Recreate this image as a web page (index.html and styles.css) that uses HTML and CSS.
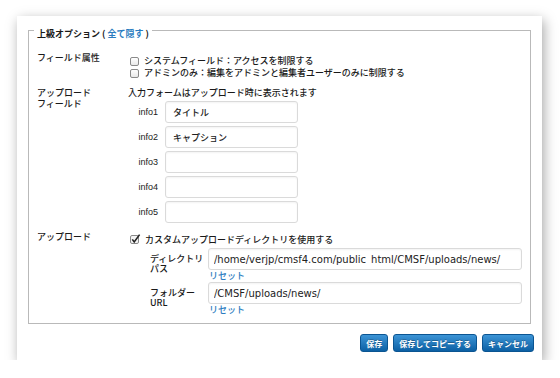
FILE: index.html
```html
<!DOCTYPE html>
<html lang="ja">
<head>
  <meta charset="UTF-8">
  <meta name="viewport" content="width=device-width, initial-scale=1.0">
  <title>上級オプション</title>
  <link rel="stylesheet" href="styles.css">
</head>
<body>
  <div class="dialog">
    <fieldset class="options">
      <legend>上級オプション ( <a href="#">全て隠す</a> )</legend>

      <div class="row">
        <div class="row-label">フィールド属性</div>
        <div class="checks">
          <label class="check"><span class="box"></span>システムフィールド：アクセスを制限する</label>
          <label class="check"><span class="box"></span>アドミンのみ：編集をアドミンと編集者ユーザーのみに制限する</label>
        </div>
      </div>

      <div class="row">
        <div class="row-label">アップロード<br>フィールド</div>
        <div>
          <div class="hint">入力フォームはアップロード時に表示されます</div>
          <div class="info-list">
            <div class="info-row"><label for="info1">info1</label><input type="text" id="info1" value="タイトル"></div>
            <div class="info-row"><label for="info2">info2</label><input type="text" id="info2" value="キャプション"></div>
            <div class="info-row"><label for="info3">info3</label><input type="text" id="info3"></div>
            <div class="info-row"><label for="info4">info4</label><input type="text" id="info4"></div>
            <div class="info-row"><label for="info5">info5</label><input type="text" id="info5"></div>
          </div>
        </div>
      </div>

      <div class="row">
        <div class="row-label">アップロード</div>
        <div>
          <div class="checks">
            <label class="check">
              <svg class="box-checked" width="11" height="11" viewBox="0 0 11 11">
                <rect x="0.5" y="1.5" width="8" height="8" rx="1.5" fill="#f4f4f4" stroke="#8a8a8a"/>
                <path d="M2.3 5.4 L4.2 8 L9.6 0.6" fill="none" stroke="#222" stroke-width="1.6"/>
              </svg>カスタムアップロードディレクトリを使用する
            </label>
          </div>
          <div class="paths">
            <div class="path-row">
              <label for="dir-path">ディレクトリ<br>パス</label>
              <div>
                <input type="text" id="dir-path" class="path-input" value="/home/verjp/cmsf4.com/public_html/CMSF/uploads/news/">
                <a href="#" class="reset">リセット</a>
              </div>
            </div>
            <div class="path-row">
              <label for="folder-url">フォルダー<br>URL</label>
              <div>
                <input type="text" id="folder-url" class="path-input" value="/CMSF/uploads/news/">
                <a href="#" class="reset">リセット</a>
              </div>
            </div>
          </div>
        </div>
      </div>
    </fieldset>

    <div class="actions">
      <button>保存</button>
      <button>保存してコピーする</button>
      <button>キャンセル</button>
    </div>
  </div>
</body>
</html>
```

FILE: styles.css
```css
/* Page */
body {
  margin: 0;
  padding: 16px 0 0 17px;
  background: #fff;
  font-family: "Noto Sans CJK JP", sans-serif;
  font-size: 9px;
  font-weight: 500;
  color: #1a1a1a;
}

a {
  color: #2a7cc0;
  text-decoration: none;
}

/* Dialog card */
.dialog {
  width: 525px;
  height: 344px;
  box-sizing: border-box;
  padding: 5px 11px 9px;
  background: #fff;
  box-shadow: 2px 4px 12px rgba(0, 0, 0, 0.35);
}

.options {
  margin: 0;
  padding: 13px 7px 7px 8px;
  border: 1px solid #b9b9b9;
  min-width: 0;
}

.options legend {
  margin-left: -3px;
  padding: 8px 3px 0;
  font-weight: bold;
  line-height: 10px;
}

/* Form rows */
.row {
  display: grid;
  grid-template-columns: 91px 1fr;
  margin-bottom: 8px;
}

.row:last-child {
  margin-bottom: 0;
}

.row-label {
  line-height: 11px;
}

.checks {
  padding-top: 3px;
}

.check {
  display: flex;
  align-items: center;
  height: 12px;
  line-height: 12px;
}

.box {
  width: 7px;
  height: 7px;
  margin: 0 5px 0 2px;
  border: 1px solid #8a8a8a;
  border-radius: 2px;
  background: linear-gradient(#fff, #e9e9e9);
}

.box-checked {
  margin: -2px 4px 0 2px;
}

.hint {
  line-height: 12px;
}

/* Inputs */
input[type="text"] {
  box-sizing: border-box;
  height: 22px;
  margin: 0;
  padding: 0 7px;
  border: 1px solid #dadada;
  border-radius: 3px;
  background: #fff;
  box-shadow: inset 0 1px 2px rgba(0, 0, 0, 0.05);
  font-family: "Noto Sans CJK JP", sans-serif;
  font-size: 9px;
  font-weight: 500;
  line-height: 20px;
  color: #222;
  outline: none;
}

.info-list {
  margin-top: 2px;
}

.info-row {
  display: flex;
  align-items: center;
  gap: 7px;
  margin-bottom: 3px;
}

.info-row:last-child {
  margin-bottom: 0;
}

.info-row label {
  width: 30px;
  text-align: right;
  font-family: "Liberation Sans", Arial, sans-serif;
  font-size: 9px;
  font-weight: normal;
}

.info-row input {
  width: 133px;
}

.paths {
  margin-top: 2px;
}

.path-row {
  display: grid;
  grid-template-columns: 58px 314px;
  margin-left: 22px;
  margin-bottom: 1px;
}

.path-row label {
  padding-top: 6px;
  line-height: 10px;
}

input.path-input {
  display: block;
  width: 314px;
  padding-left: 5px;
  font-family: "DejaVu Sans", sans-serif;
  font-size: 10px;
  font-weight: normal;
}

.reset {
  display: block;
  margin-left: 1px;
  line-height: 11px;
}

/* Buttons */
.actions {
  display: flex;
  justify-content: flex-end;
  gap: 5px;
  margin: 10px -3px 0 0;
}

.actions button {
  height: 18px;
  padding: 0 5px;
  border: 1px solid #0b5592;
  border-radius: 3px;
  background: linear-gradient(#3c94d6, #0c60a4);
  color: #fff;
  font-family: "Noto Sans CJK JP", sans-serif;
  font-size: 8px;
  font-weight: bold;
  text-shadow: 0 -1px 0 rgba(0, 0, 0, 0.25);
  cursor: pointer;
}
```
